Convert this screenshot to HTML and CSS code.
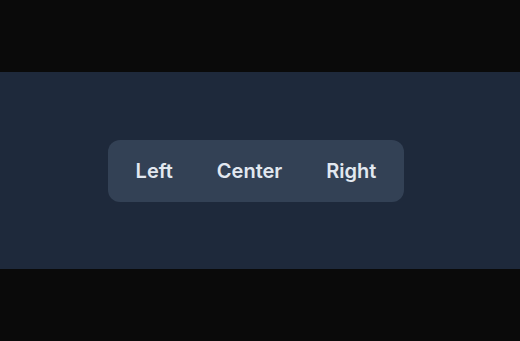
FILE: index.html
```html
<!DOCTYPE html>
<html lang="en">
  <head>
    <meta charset="UTF-8" />
    <meta name="viewport" content="width=device-width, initial-scale=1.0" />
    <title>Tabs</title>
    <link rel="stylesheet" href="styles.css">
  </head>
  <body>
    <div id="stage">
      <div class="group">
        <button class="tab">Left</button>
        <button class="tab">Center</button>
        <button class="tab">Right</button>
      </div>
    </div>
  </body>
</html>
```

FILE: styles.css
```css
* {
  padding: 0;
  margin: 0;
  box-sizing: border-box;
}
body {
  background-color: #0a0a0a;
  min-height: 100vh;
  display: flex;
  flex-direction: column;
  justify-content: center;
  font-family: Inter, "Liberation Sans", sans-serif;
}
#stage {
  height: 197px;
  padding-right: 8px;
  background-color: #1e293b;
  display: flex;
  justify-content: center;
  align-items: center;
}
.group {
  display: flex;
  flex-direction: row;
  gap: 4px;
  padding: 8px;
  background-color: #334155;
  border-radius: 12px;
}
.tab {
  border: none;
  background: none;
  color: #e2e8f0;
  font-family: inherit;
  font-size: 20px;
  font-weight: 600;
  line-height: 28px;
  padding: 9px 20px;
  border-radius: 8px;
}
```
